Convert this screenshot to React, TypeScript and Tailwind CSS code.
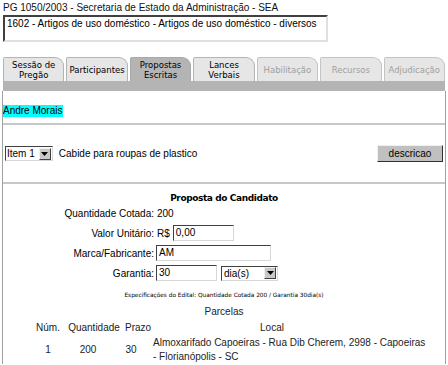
import React from "react"

const tabs = [
  { label: ["Sessão de", "Pregão"], state: "normal" },
  { label: ["Participantes"], state: "normal" },
  { label: ["Propostas", "Escritas"], state: "active" },
  { label: ["Lances", "Verbais"], state: "normal" },
  { label: ["Habilitação"], state: "disabled" },
  { label: ["Recursos"], state: "disabled" },
  { label: ["Adjudicação"], state: "disabled" },
]

const verdana = { fontFamily: '"DejaVu Sans", Verdana, sans-serif' }

function DropArrow() {
  return (
    <span className="flex h-[12px] w-[12px] items-center justify-center border border-t-[#f0f0f0] border-l-[#f0f0f0] border-b-[#404040] border-r-[#404040] bg-[#c8c8c8]">
      <svg width="7" height="4" viewBox="0 0 7 4">
        <path d="M0 0h7L3.5 4z" fill="#000" />
      </svg>
    </span>
  )
}

function Field({ value, width }: { value: string; width: string }) {
  return (
    <div className={`h-[16px] ${width} border border-t-[#404040] border-l-[#404040] border-b-[#d8d8d8] border-r-[#d8d8d8] bg-white pl-[2px] leading-[14px]`}>
      {value}
    </div>
  )
}

export default function App() {
  return (
    <div className="w-[448px] h-[365px] overflow-hidden bg-white text-[10px] text-black" style={{ fontFamily: '"Liberation Sans", Arial, sans-serif' }}>
      <div className="pl-[3px] pt-[1px] leading-[13px] text-[#111]">PG 1050/2003 - Secretaria de Estado da Administração - SEA</div>

      <div className="ml-[3px] mt-[1px] h-[27px] w-[325px] border-2 border-t-[#404040] border-l-[#404040] border-b-[#e0e0e0] border-r-[#e0e0e0] px-[2px] leading-[14px]">
        1602 - Artigos de uso doméstico - Artigos de uso doméstico - diversos
      </div>

      {/* abas */}
      <div className="ml-[3px] mt-[15px] flex w-[442px] gap-[2px]" style={verdana}>
        {tabs.map((t, i) => (
          <div
            key={i}
            className={`flex h-[24px] flex-1 flex-col items-center justify-center rounded-tr-[9px] rounded-tl-[2px] border border-b-0 text-[8.5px] leading-[10px] ${
              t.state === "active"
                ? "border-[#a8a8a8] bg-[#b4b4b4] text-black"
                : t.state === "disabled"
                ? "border-[#c4c4c4] bg-[#e6e6e6] text-[#a0a0a0]"
                : "border-[#b4b4b4] bg-[#e6e6e6] text-black"
            }`}
          >
            {t.label.map(l => (
              <span key={l}>{l}</span>
            ))}
          </div>
        ))}
      </div>
      <div className="ml-[3px] h-[10px] w-[442px] bg-[#b4b4b4]" />

      {/* conteudo */}
      <div className="ml-[2px] w-[444px] border-x border-[#a0a0a0]">
        <div className="pt-[12px] pb-[5px]">
          <span className="inline-block h-[12px] bg-[#00ffff] pr-[1px] leading-[12px]">Andre Morais</span>
        </div>
        <div className="border-t-2 border-[#c8c8c8]" />

        <div className="flex h-[57px] items-center justify-between pl-[2px] pr-[2px]">
          <div className="flex items-center">
            <div className="flex h-[15px] items-center border border-t-[#404040] border-l-[#404040] border-b-[#d8d8d8] border-r-[#d8d8d8] pl-[1px] pr-[1px] leading-[13px]">
              <span className="mr-[4px]">Item 1</span>
              <DropArrow />
            </div>
            <span className="ml-[6px]">Cabide para roupas de plastico</span>
          </div>
          <button className="h-[17px] w-[66px] border border-t-[#f0f0f0] border-l-[#f0f0f0] border-b-[#303030] border-r-[#303030] bg-[#c0c0c0] text-[10px] leading-[13px]">
            descricao
          </button>
        </div>
        <div className="border-t-2 border-[#c8c8c8]" />

        <div className="pt-[7px] text-center text-[9px] font-bold leading-[14px] tracking-[-0.4px]" style={verdana}>
          Proposta do Candidato
        </div>

        <div className="flex flex-col gap-[4px]">
          <div className="flex h-[16px] items-center">
            <span className="w-[151px] text-right">Quantidade Cotada:</span>
            <span className="ml-[3px]">200</span>
          </div>
          <div className="flex h-[16px] items-center">
            <span className="w-[151px] text-right">Valor Unitário:</span>
            <span className="ml-[3px] mr-[3px]">R$</span>
            <Field value="0,00" width="w-[61px]" />
          </div>
          <div className="flex h-[16px] items-center">
            <span className="w-[151px] text-right">Marca/Fabricante:</span>
            <span className="ml-[2px]">
              <Field value="AM" width="w-[115px]" />
            </span>
          </div>
          <div className="flex h-[16px] items-center">
            <span className="w-[151px] text-right">Garantia:</span>
            <span className="ml-[2px]">
              <Field value="30" width="w-[61px]" />
            </span>
            <div className="ml-[4px] flex h-[15px] w-[57px] items-center justify-between border border-t-[#404040] border-l-[#404040] border-b-[#d8d8d8] border-r-[#d8d8d8] pl-[2px] pr-[1px] leading-[13px]">
              <span>dia(s)</span>
              <DropArrow />
            </div>
          </div>
        </div>

        <div className="mt-[10px] text-center text-[5.8px] leading-[8px]" style={verdana}>
          Especificações do Edital: Quantidade Cotada 200 / Garantia 30dia(s)
        </div>

        <div className="mt-[6px] text-center leading-[14px] text-[#222]">Parcelas</div>

        <table className="ml-[30px] mt-[1px] w-[358px] table-fixed border-collapse text-[#222]">
          <thead>
            <tr className="leading-[16px]">
              <th className="w-[30px] p-0 text-center font-normal">Núm.</th>
              <th className="w-[62px] p-0 text-center font-normal">Quantidade</th>
              <th className="w-[28px] p-0 pr-[4px] text-center font-normal">Prazo</th>
              <th className="w-[238px] p-0 text-center font-normal">Local</th>
            </tr>
          </thead>
          <tbody>
            <tr className="leading-[14px]">
              <td className="p-0 text-center">1</td>
              <td className="p-0 pr-[12px] text-center">200</td>
              <td className="p-0 pr-[16px] text-center">30</td>
              <td className="whitespace-nowrap p-0 text-left">
                Almoxarifado Capoeiras - Rua Dib Cherem, 2998 - Capoeiras
                <br />- Florianópolis - SC
              </td>
            </tr>
          </tbody>
        </table>
      </div>
    </div>
  )
}
